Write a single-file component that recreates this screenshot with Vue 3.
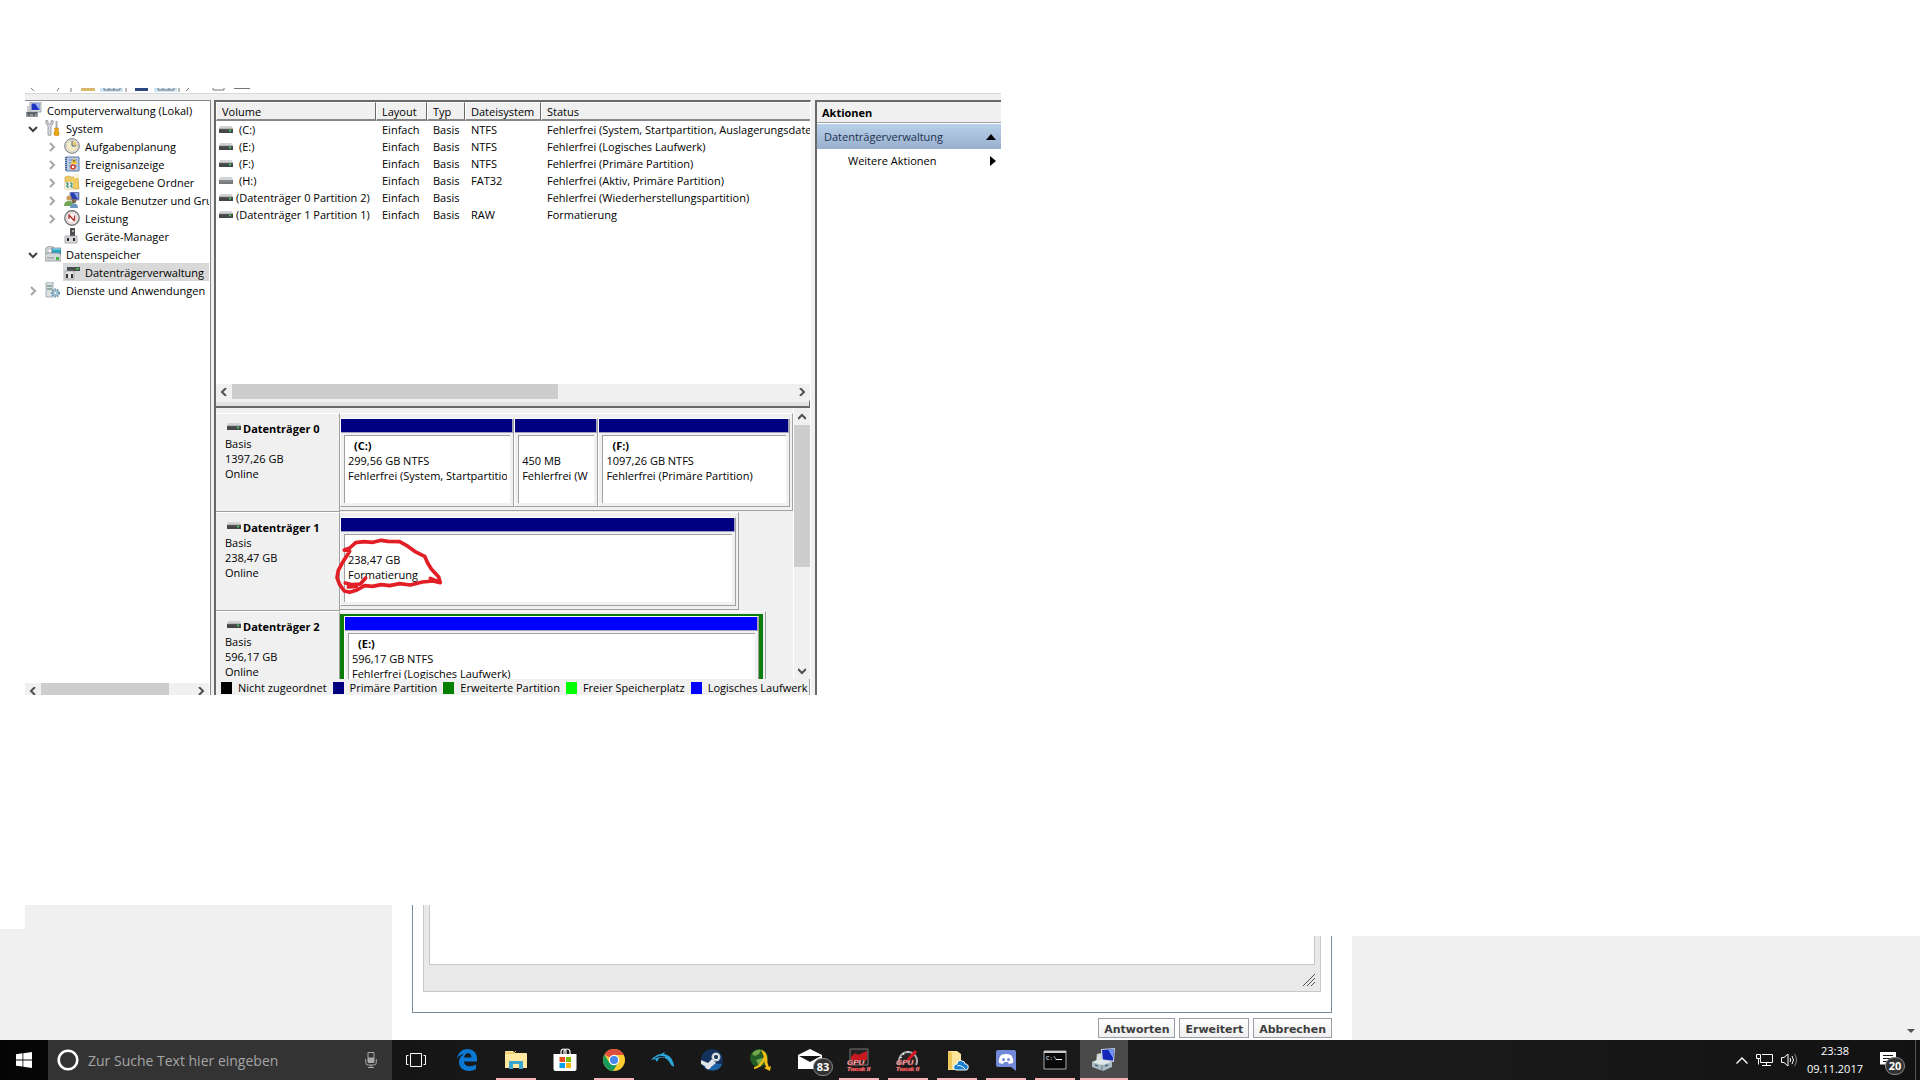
<template>
  <div class="desktop">
    <section class="mmc-window">
      <div class="toolbar">
        <svg class="toolbar-icons" width="240" height="4" viewBox="0 0 240 4">
          <path d="M6 0l3 3M34 0l-2 3M46 0v4M101 0v4M154 0v4M164 0l-3 3" stroke="#777" fill="none" />
          <rect x="56" y="0" width="14" height="3" fill="#d9b768" />
          <rect x="75" y="0" width="23" height="4" fill="#cde6f7" />
          <path d="M79 0v2h16V0M84 0v2M89 0v2" stroke="#777" fill="none" />
          <rect x="110" y="0" width="13" height="3" fill="#2b4681" />
          <rect x="129" y="0" width="23" height="4" fill="#cde6f7" />
          <path d="M133 0v2h16V0M138 0v2M144 0v2" stroke="#777" fill="none" />
          <path d="M188 0v2h11V0M209 .5h16" stroke="#777" fill="none" />
        </svg>
      </div>

      <div class="panes">
        <nav class="tree-pane">
          <ul class="tree">
            <li
              v-for="node in tree"
              :key="node.label"
              class="tree-row"
              :class="`depth-${node.depth}`"
            >
              <span v-if="node.depth" class="twisty">
                <svg v-if="node.state" width="10" height="10" viewBox="0 0 10 10">
                  <path v-if="node.state === 'open'" d="M1 3l4 4 4-4" class="twisty-open" />
                  <path v-else d="M3 1l4 4-4 4" class="twisty-closed" />
                </svg>
              </span>
              <span class="tree-label" :class="{ selected: node.selected }">
                <svg width="16" height="16" viewBox="0 0 16 16" v-html="icons[node.icon]"></svg>
                <span>{{ node.label }}</span>
              </span>
            </li>
          </ul>
          <div class="scrollbar-h tree-scroll">
            <button class="scroll-btn" aria-label="Links"><svg width="8" height="8" viewBox="0 0 8 8"><path d="M6 0L2 4l4 4" /></svg></button>
            <div class="track"><div class="thumb" :style="{ width: '84%' }"></div></div>
            <button class="scroll-btn" aria-label="Rechts"><svg width="8" height="8" viewBox="0 0 8 8"><path d="M2 0l4 4-4 4" /></svg></button>
          </div>
        </nav>

        <main class="center-pane">
          <div class="volume-list">
            <table class="volumes">
              <colgroup>
                <col class="col-volume">
                <col class="col-layout">
                <col class="col-type">
                <col class="col-fs">
                <col>
              </colgroup>
              <thead>
                <tr>
                  <th v-for="col in columns" :key="col">{{ col }}</th>
                </tr>
              </thead>
              <tbody>
                <tr v-for="vol in volumes" :key="vol.name">
                  <td class="cell-name">
                    <svg width="14" height="8" viewBox="0 0 14 8" v-html="vol.removable ? icons.driveGray : icons.drive"></svg>
                    <span :class="{ letter: vol.name.length < 5 }">{{ vol.name }}</span>
                  </td>
                  <td>Einfach</td>
                  <td>Basis</td>
                  <td>{{ vol.fs }}</td>
                  <td>{{ vol.status }}</td>
                </tr>
              </tbody>
            </table>
            <div class="scrollbar-h">
              <button class="scroll-btn" aria-label="Links"><svg width="8" height="8" viewBox="0 0 8 8"><path d="M6 0L2 4l4 4" /></svg></button>
              <div class="track"><div class="thumb" :style="{ width: '58%' }"></div></div>
              <button class="scroll-btn" aria-label="Rechts"><svg width="8" height="8" viewBox="0 0 8 8"><path d="M2 0l4 4-4 4" /></svg></button>
            </div>
          </div>
          <div class="splitter"></div>

          <div class="disk-area">
            <div class="disk-list">
              <div v-for="disk in disks" :key="disk.name" class="disk">
                <div class="disk-info">
                  <div class="disk-name">
                    <svg width="14" height="8" viewBox="0 0 14 8" v-html="icons.drive"></svg>
                    <span>{{ disk.name }}</span>
                  </div>
                  <div>Basis</div>
                  <div>{{ disk.size }}</div>
                  <div>Online</div>
                </div>
                <div class="disk-track">
                  <div class="disk-frame" :class="{ extended: disk.extended }" :style="{ width: disk.width + '%' }">
                    <div class="partitions">
                      <div
                        v-for="(part, i) in disk.parts"
                        :key="i"
                        class="partition"
                        :class="{ logical: disk.extended }"
                        :style="{ flexGrow: part.share }"
                      >
                        <div class="partition-bar"></div>
                        <div class="partition-box">
                          <div class="partition-letter">{{ part.letter }}</div>
                          <div>{{ part.size }}</div>
                          <div>{{ part.status }}</div>
                        </div>
                      </div>
                    </div>
                  </div>
                </div>
                <svg v-if="disk.marked" class="scribble" width="110" height="58" viewBox="400 502 330 174">
                  <path d="M434 541L450 544L443 556L430 576L416 602L412 624L420 645L434 664L450 668L472 661L495 648L518 650L545 645L570 648L600 642L632 646L668 637L700 634L722 639L717 622L695 598L684 580L675 560L645 545L620 527L600 516L565 515L545 512L520 518L492 516L468 519L450 535L434 541" />
                  <path d="M437 640L458 645L482 643L498 625M692 626L718 637M446 652L470 650" />
                </svg>
              </div>
            </div>
            <div class="scrollbar-v">
              <button class="scroll-btn" aria-label="Hoch"><svg width="8" height="8" viewBox="0 0 8 8"><path d="M0 6l4-4 4 4" /></svg></button>
              <div class="track"><div class="thumb" :style="{ height: '60%' }"></div></div>
              <button class="scroll-btn" aria-label="Runter"><svg width="8" height="8" viewBox="0 0 8 8"><path d="M0 2l4 4 4-4" /></svg></button>
            </div>
          </div>

          <div class="legend">
            <span v-for="item in legend" :key="item.label" class="legend-item">
              <i class="swatch" :class="item.kind"></i>{{ item.label }}
            </span>
          </div>
        </main>

        <aside class="actions-pane">
          <h2>Aktionen</h2>
          <button class="action-group">
            <span>Datenträgerverwaltung</span>
            <svg width="10" height="6" viewBox="0 0 10 6"><path d="M0 6l5-6 5 6z" /></svg>
          </button>
          <button class="action-item">
            <span>Weitere Aktionen</span>
            <svg width="6" height="10" viewBox="0 0 6 10"><path d="M0 0l6 5-6 5z" /></svg>
          </button>
        </aside>
      </div>
    </section>

    <section class="forum">
      <div class="side side-left"></div>
      <div class="forum-main">
        <div class="editor-border">
          <div class="editor">
            <textarea aria-label="Nachricht"></textarea>
            <svg class="grip" width="12" height="12" viewBox="0 0 12 12"><path d="M0 12L12 0M4 12l8-8M8 12l4-4" /></svg>
          </div>
        </div>
        <div class="form-buttons">
          <button>Antworten</button>
          <button>Erweitert</button>
          <button>Abbrechen</button>
        </div>
      </div>
      <div class="side side-right">
        <svg width="8" height="4" viewBox="0 0 8 4"><path d="M0 0h8L4 4z" fill="#505050" /></svg>
      </div>
      <div class="cover"></div>
    </section>

    <footer class="taskbar">
      <button class="start" aria-label="Start">
        <svg width="16" height="16" viewBox="0 0 16 16"><path d="M0 2.2l6.5-.9v6.2H0zM7.3 1.2L16 0v7.5H7.3zM0 8.4h6.5v6.2L0 13.7zM7.3 8.4H16V16l-8.7-1.2z" fill="#fff" /></svg>
      </button>
      <label class="search">
        <svg width="22" height="22" viewBox="0 0 22 22"><circle cx="11" cy="11" r="9.3" fill="none" stroke="#fff" stroke-width="2.6" /></svg>
        <input type="text" placeholder="Zur Suche Text hier eingeben">
        <svg width="12" height="16" viewBox="0 0 12 16"><path d="M3 .5h6v10H3zM.7 7v3.500q0 2.500 2.500 2.500h5.600q2.500 0 2.500-2.500V7M6 13v2.500M3 15.500h6" fill="none" stroke="#aaa" /><path d="M3 5.500h6v5H3z" fill="#aaa" /></svg>
      </label>
      <button class="task-view" aria-label="Taskansicht">
        <svg width="20" height="14" viewBox="0 0 20 14"><path d="M4.500.5h11v13h-11zM2.500 2.500h-2v9h2M17.500 2.500h2v9h-2" fill="none" stroke="#fff" /></svg>
      </button>
      <div class="apps">
        <button
          v-for="app in apps"
          :key="app.name"
          class="app"
          :class="{ running: app.running, active: app.active }"
          :aria-label="app.name"
        >
          <svg width="24" height="24" viewBox="0 0 24 24" v-html="icons[app.icon]"></svg>
          <span v-if="app.badge" class="badge mail-badge">{{ app.badge }}</span>
        </button>
      </div>
      <div class="tray">
        <svg width="12" height="7" viewBox="0 0 12 7"><path d="M.5 6.500L6 1l5.500 5.500" fill="none" stroke="#fff" stroke-width="1.400" /></svg>
        <svg width="17" height="14" viewBox="0 0 17 14"><path d="M6 1.500h10.500v8H4.500V6M10.500 9.500v3M6 12.500h9M.5 1.500h4v4h-4zM2.500 5.500v6" fill="none" stroke="#fff" /></svg>
        <svg width="17" height="14" viewBox="0 0 17 14"><path d="M.5 4.500h2.500l4-3.500v12l-4-3.500H.5z" fill="none" stroke="#fff" /><path d="M9 5q1.500 2 0 4M11 3q3 4 0 8" fill="none" stroke="#fff" /><path d="M13.500 1q4 6 0 12" fill="none" stroke="#888" /></svg>
        <div class="clock">
          <div>23:38</div>
          <div>09.11.2017</div>
        </div>
        <div class="notify">
          <svg width="16" height="16" viewBox="0 0 16 16"><path d="M0 0h16v12.500H8L5 15.500v-3H0z" fill="#fff" /><path d="M3 3.500h10M3 6.500h10M3 9.500h6" stroke="#161616" /></svg>
          <span class="badge">20</span>
        </div>
      </div>
    </footer>
  </div>
</template>

<script setup>
const columns = ['Volume', 'Layout', 'Typ', 'Dateisystem', 'Status'];

const tree = [
  { label: 'Computerverwaltung (Lokal)', depth: 0, icon: 'computer' },
  { label: 'System', depth: 1, icon: 'tools', state: 'open' },
  { label: 'Aufgabenplanung', depth: 2, icon: 'clock', state: 'closed' },
  { label: 'Ereignisanzeige', depth: 2, icon: 'events', state: 'closed' },
  { label: 'Freigegebene Ordner', depth: 2, icon: 'shared', state: 'closed' },
  { label: 'Lokale Benutzer und Gruppen', depth: 2, icon: 'users', state: 'closed' },
  { label: 'Leistung', depth: 2, icon: 'perf', state: 'closed' },
  { label: 'Geräte-Manager', depth: 2, icon: 'device' },
  { label: 'Datenspeicher', depth: 1, icon: 'storage', state: 'open' },
  { label: 'Datenträgerverwaltung', depth: 2, icon: 'diskmgmt', selected: true },
  { label: 'Dienste und Anwendungen', depth: 1, icon: 'services', state: 'closed' }
];

const volumes = [
  { name: '(C:)', fs: 'NTFS', status: 'Fehlerfrei (System, Startpartition, Auslagerungsdatei)' },
  { name: '(E:)', fs: 'NTFS', status: 'Fehlerfrei (Logisches Laufwerk)' },
  { name: '(F:)', fs: 'NTFS', status: 'Fehlerfrei (Primäre Partition)' },
  { name: '(H:)', fs: 'FAT32', status: 'Fehlerfrei (Aktiv, Primäre Partition)', removable: true },
  { name: '(Datenträger 0 Partition 2)', fs: '', status: 'Fehlerfrei (Wiederherstellungspartition)' },
  { name: '(Datenträger 1 Partition 1)', fs: 'RAW', status: 'Formatierung' }
];

const disks = [
  {
    name: 'Datenträger 0',
    size: '1397,26 GB',
    width: 100,
    parts: [
      { letter: '(C:)', size: '299,56 GB NTFS', status: 'Fehlerfrei (System, Startpartitio', share: 175 },
      { letter: '', size: '450 MB', status: 'Fehlerfrei (W', share: 82 },
      { letter: '(F:)', size: '1097,26 GB NTFS', status: 'Fehlerfrei (Primäre Partition)', share: 193 }
    ]
  },
  {
    name: 'Datenträger 1',
    size: '238,47 GB',
    width: 88,
    marked: true,
    parts: [{ letter: '', size: '238,47 GB', status: 'Formatierung', share: 1 }]
  },
  {
    name: 'Datenträger 2',
    size: '596,17 GB',
    width: 94,
    extended: true,
    parts: [{ letter: '(E:)', size: '596,17 GB NTFS', status: 'Fehlerfrei (Logisches Laufwerk)', share: 1 }]
  }
];

const legend = [
  { label: 'Nicht zugeordnet', kind: 'unallocated' },
  { label: 'Primäre Partition', kind: 'primary' },
  { label: 'Erweiterte Partition', kind: 'extended' },
  { label: 'Freier Speicherplatz', kind: 'free' },
  { label: 'Logisches Laufwerk', kind: 'logical' }
];

const apps = [
  { name: 'Edge', icon: 'edge' },
  { name: 'Explorer', icon: 'explorer', running: true },
  { name: 'Store', icon: 'store' },
  { name: 'Chrome', icon: 'chrome', running: true },
  { name: 'Dolphin', icon: 'dolphin' },
  { name: 'Steam', icon: 'steam' },
  { name: 'JDownloader', icon: 'jdownloader' },
  { name: 'Mail', icon: 'mail', badge: '83' },
  { name: 'GPU Tweak II', icon: 'gpu', running: true },
  { name: 'GPU Tweak II Monitor', icon: 'gpuMonitor', running: true },
  { name: 'OneDrive', icon: 'onedrive', running: true },
  { name: 'Discord', icon: 'discord', running: true },
  { name: 'Eingabeaufforderung', icon: 'cmd', running: true },
  { name: 'Computerverwaltung', icon: 'mmc', active: true }
];

// svg contents, tree icons are 16x16, drives 14x8, taskbar icons 24x24
const icons = {
  computer: '<path d="M4 0h11v10H4z" fill="#d8dce0" stroke="#8a929a" stroke-width=".7"/><path d="M5.500 1.500h8v6.500h-8z" fill="#1c35c0"/><path d="M9 1.500h4.500v6.500z" fill="#9db4f0"/><path d="M1 4h3v7H1z" fill="#c8ccd0"/><path d="M0 10h12v5H0z" fill="#8d959d"/><path d="M1 11h10M2 13h2M7 13h2" stroke="#333"/>',
  tools: '<path d="M1 0v4l2 2v9q1.500 1.500 3 0V6l2-2V0L6 1v3H3V1z" fill="#d9dcdf" stroke="#7b8086" stroke-width=".7"/><path d="M10.500 1h2v7h-2z" fill="#a8adb2"/><path d="M9.500 8h4l-.5 3 1 1v3l-2 1-3-1v-3l1-1z" fill="#e9a51a" stroke="#b97b08" stroke-width=".5"/>',
  clock: '<circle cx="8" cy="8" r="7.300" fill="#e9e9e6" stroke="#777" stroke-width="1"/><circle cx="8" cy="8" r="5.500" fill="#f8edc8" stroke="#b6b6b0" stroke-width=".5"/><path d="M8 8V3a5 5 0 0 1 5 5z" fill="#edc975"/><path d="M8 3v5h4" fill="none" stroke="#476a96"/>',
  events: '<path d="M2 1h13v14H2z" fill="#b8cce6" stroke="#5a77a5"/><path d="M5 4h8M5 7h8M5 10h8" stroke="#6482b6"/><path d="M2 1v14" stroke="#445f91" stroke-width="2" stroke-dasharray="1 1"/><path d="M10 2l3.500 6h-7z" fill="#f2c93b"/><path d="M10 4v2" stroke="#333"/><circle cx="9" cy="11" r="2.800" fill="#d44a37"/><path d="M8 10l2 2M10 10l-2 2" stroke="#fff"/>',
  shared: '<path d="M1 3l4-1 2 1h7l1 12H1z" fill="#f0cb63" stroke="#c39a37" stroke-width=".6"/><path d="M10 0h5v4h-5z" fill="#faf4dc"/><path d="M1 8h8v7H1z" fill="#e8f0df"/><path d="M2 9h2v2H3v2h2M6 9h2v2H7v2h2" stroke="#267f70" fill="none"/>',
  users: '<path d="M6 0h9v8H6z" fill="#263fae" stroke="#9ba7bd"/><path d="M10 1h4v6z" fill="#8fa6e4"/><circle cx="5" cy="6" r="2.600" fill="#c89c5c"/><path d="M0 14q0-5 5-5t5 5z" fill="#72a758"/><circle cx="10" cy="9" r="2.300" fill="#7f6650"/><path d="M6 16q0-4.500 4-4.500t4 4.500z" fill="#6c94bd"/>',
  perf: '<circle cx="8" cy="8" r="7.200" fill="#fff" stroke="#777" stroke-width="1.400"/><circle cx="8" cy="8" r="5.300" fill="#fbf4f4" stroke="#c4a0a0" stroke-width=".6"/><path d="M4.500 4.500l6 6.500M5 5v4M10.500 5.500v5" fill="none" stroke="#b42e2e" stroke-width="1.300"/>',
  device: '<path d="M6 0h5v10H6z" fill="#4c5054"/><path d="M8 2h2v2H8z" fill="#aaa"/><path d="M1 8h12v7H1z" fill="#d7d9db" stroke="#8d9195" stroke-width=".7"/><path d="M4 10v3M10 10v3" stroke="#222" stroke-width="2"/>',
  storage: '<circle cx="5" cy="5" r="5" fill="#c9cfce" stroke="#7e8787" stroke-width=".6"/><circle cx="5" cy="5" r="1.500" fill="#fff"/><path d="M7 2h9v6H7z" fill="#2ba6c6" stroke="#55676e" stroke-width=".6"/><path d="M7.500 3h8" stroke="#b9e8f3"/><path d="M0 9l2-2h12l2 2v6H0z" fill="#d5d8da" stroke="#7c8387" stroke-width=".7"/><path d="M2 12h7" stroke="#858b90"/><path d="M11 11h3v3h-3z" fill="#43b941"/>',
  diskmgmt: '<path d="M3 3l2-2h9l2 2z" fill="#d8dbdd"/><path d="M3 3h13v4H3z" fill="#484d50"/><path d="M12 4h3v1.500h-3z" fill="#40c44a"/><path d="M1 7h9v8H1z" fill="#e3e5e6" stroke="#999" stroke-width=".7"/><path d="M3 10v4M8 10v4" stroke="#333" stroke-width="2"/>',
  services: '<path d="M1 1l2-1h5v15H1z" fill="#dce0e3" stroke="#87929b" stroke-width=".7"/><path d="M2 4h5M2 7h5" stroke="#467b61"/><circle cx="10.500" cy="11" r="3.500" fill="#b5cddd" stroke="#6692ad" stroke-width="2" stroke-dasharray="1.500 1"/><circle cx="10.500" cy="11" r="1.500" fill="#f7fafb" stroke="#6692ad" stroke-width=".6"/>',
  drive: '<path d="M1 0h12l1 3H0z" fill="#d1d3d4"/><path d="M0 3h14v4H0z" fill="#45484b"/><path d="M0 3h14" stroke="#777" stroke-width=".6"/><path d="M10 4.500h2" stroke="#42df5c" stroke-width="1.300"/>',
  driveGray: '<path d="M1 0h12l1 3H0z" fill="#d1d3d4"/><path d="M0 3h14v4H0z" fill="#75797c"/><path d="M1 4h12" stroke="#999"/>',
  edge: '<path d="M2 10.500C3.200 4.200 7.500 1 12.500 1 18.700 1 22 5.400 22 11v2.500H9c.2 3.400 3.200 4.800 6 4.800 2.300 0 4.300-.7 6-1.700v4.500C19 22.400 16.700 23 14 23 8 23 4 19.500 4 14c0-3.600 2-6.300 5-8-3 .5-5.500 2-7 4.500zM9.200 9.500h7.300C16.500 7 15.300 5.300 13 5.300c-2.200 0-3.500 1.800-3.800 4.200z" fill="#0b78d4"/>',
  explorer: '<path d="M1 4q0-1 1-1h7l2 2h11q1 0 1 1v14H1z" fill="#ffe9a0"/><path d="M1 5h9l2-2" stroke="#e2b545" fill="none"/><path d="M5 13h14v8h-4v-5H9v5H5z" fill="#3ba6cf"/>',
  store: '<path d="M8 6V4q0-3 3-3 2 0 2 3v2M11 6V3q1-2 3-2 3 0 3 3v2" fill="none" stroke="#fff" stroke-width="1.200"/><path d="M.5 6h23v15q0 2-2 2h-19q-2 0-2-2z" fill="#fff"/><path d="M6.500 9H12v5H6.500z" fill="#e84d20"/><path d="M13 9h5v5h-5z" fill="#7dba00"/><path d="M6.500 15H12v5H6.500z" fill="#00a0ed"/><path d="M13 15h5v5h-5z" fill="#fdb700"/>',
  chrome: '<circle cx="12" cy="12" r="11" fill="#fbcd33"/><path d="M12 12L2.500 6.500A11 11 0 0 1 21.700 7H12z" fill="#df4d3f"/><path d="M2.500 6.500A11 11 0 0 0 11 23l5.500-9L12 12 7.600 15z" fill="#179b5d"/><circle cx="12" cy="12" r="5.200" fill="#fff"/><circle cx="12" cy="12" r="4" fill="#4789ef"/>',
  dolphin: '<path d="M0 12q2-2 3-3 4-3 7-3l4-2-1 2q7 1 9.500 9l.5 4-3-2q-2-5-6-7-4-1-6 0l-2 4-2-3-4 1z" fill="#2da8dc"/><path d="M4 10q5-3 10-1" fill="none" stroke="#17171a" stroke-width="1"/>',
  steam: '<circle cx="12" cy="12" r="11" fill="#14305c"/><path d="M1 14q5 10 15 8 5-2 6-6L9 15z" fill="#1b64a5"/><circle cx="16" cy="9" r="4.500" fill="#c3ccd4"/><circle cx="16" cy="9" r="2.700" fill="#213e5c" stroke="#fff"/><path d="M1 12l7 3 4-4 4 4-5 4q-1 3-4 2-2-1-2-3l-4-2z" fill="#dde3e8"/>',
  jdownloader: '<circle cx="10" cy="10" r="9" fill="#245d24"/><path d="M3 6q4-5 9-4l-2 4-4 2zM7 12l6-2 3 3-5 6z" fill="#75a84a"/><path d="M12 2q5 1 6 7 0 6 2 10l2-1-1 5-6-3 2-1q-2-4-2-9-1-5-3-8z" fill="#f4bd18"/><path d="M5 20q6 0 11-11" stroke="#f4bd18" stroke-width="2" fill="none"/>',
  mail: '<path d="M0 7L12 1l12 6v14H0z" fill="#fff"/><path d="M1 8h22l-11 6z" fill="#151515"/>',
  gpu: '<path d="M3 1h18v16H3z" fill="#222" stroke="#777"/><path d="M4 9q4-6 7-2l9-4v9H4z" fill="#c81820"/><g fill="#fff" stroke="#d71923" stroke-width=".4" font-family="Liberation Sans" font-weight="bold" font-style="italic"><text x="0" y="17" font-size="8">GPU</text><text x="0" y="23" font-size="6">Tweak II</text></g>',
  gpuMonitor: '<path d="M4 17A9 9 0 1 1 20 17" stroke="#aaa" stroke-width="2" fill="#242424"/><path d="M12 12l8-9" stroke="#d71923" stroke-width="3"/><path d="M7 5l1 2M12 3v2M4 9l2 1" stroke="#fff"/><g fill="#fff" stroke="#d71923" stroke-width=".4" font-family="Liberation Sans" font-weight="bold" font-style="italic"><text x="0" y="17" font-size="8">GPU</text><text x="0" y="23" font-size="6">Tweak II</text></g>',
  onedrive: '<path d="M3 3h9l4 3v16H3z" fill="#ffe59a"/><path d="M3 3l4 2v17l-4-1z" fill="#edc658"/><path d="M11 22q-4-1-2-4 0-2 3-2 1-5 5-3 3 0 3 3 4 0 3 4 0 2-2 2z" fill="#1781cf" stroke="#fff"/><path d="M12 18q3-2 8 3" stroke="#fff" fill="none"/>',
  discord: '<path d="M2 4q0-2 2-2h16q2 0 2 2v19l-5-4H4q-2 0-2-2z" fill="#7289da"/><path d="M7 7q5-2 10 0 3 4 2 8l-4 1-1-2h-4l-1 2-4-1q-1-4 2-8z" fill="#fff"/><circle cx="9.500" cy="11.500" r="1.500" fill="#7289da"/><circle cx="14.500" cy="11.500" r="1.500" fill="#7289da"/>',
  cmd: '<path d="M1 3h22v18H1z" fill="#080808" stroke="#aaa"/><path d="M1 4h22" stroke="#ccc" stroke-width="2"/><text x="3" y="12" fill="#fff" font-size="6" font-family="Liberation Mono">C:\\</text><path d="M13 11.500h6" stroke="#fff"/>',
  mmc: '<path d="M5 6l5-1v10H4z" fill="#d8dcd7" stroke="#8c9592" stroke-width=".5"/><path d="M9 1l14-1-1 14-13-1z" fill="#c3cbe0"/><path d="M10 2l12-1-1 11.500-10-1z" fill="#1426b8"/><path d="M16 1.500l6-.5-1 9z" fill="#7795f5"/><path d="M0 14l8-3 12 3v5l-9 4-11-4z" fill="#a9bbc3"/><path d="M0 14l10 3 10-3-12-3z" fill="#e0e8ea"/><path d="M10 17v6" stroke="#687b85"/><path d="M3 17l3 1M13 18l3-1" stroke="#4c6873" stroke-width="1.500"/>'
};
</script>

<style>
body {
  background: #fff;
}
</style>

<style scoped>
* {
  box-sizing: border-box;
}

.desktop {
  display: flex;
  flex-direction: column;
  min-height: 100vh;
  padding-top: 88px;
  font-family: "Open Sans", "Noto Sans", sans-serif;
  font-size: 11px;
  line-height: 15px;
  color: #000;
  overflow: hidden;
}

button {
  padding: 0;
  border: 0;
  border-radius: 0;
  background: none;
  color: inherit;
  font: inherit;
}

svg {
  flex: none;
  display: block;
}

.mmc-window {
  display: flex;
  flex-direction: column;
  width: calc(50% + 16px);
  height: calc(50vh + 67px);
  margin-left: 25px;
  overflow: hidden;
}

.toolbar {
  flex: none;
  height: 6px;
  border-bottom: 1px solid #d8d8d8;
}

.panes {
  flex: 1;
  display: grid;
  grid-template-columns: 186px minmax(0, 1fr) 186px;
  grid-template-rows: minmax(0, 1fr);
  gap: 3px;
  min-height: 0;
  padding-top: 6px;
  background: #f0f0f0;
}

/* tree */
.tree-pane {
  display: flex;
  flex-direction: column;
  min-width: 0;
  border-top: 1px solid #828790;
  border-right: 1px solid #828790;
  background: #fff;
}

.tree {
  flex: 1;
  margin: 0;
  padding: 0;
  list-style: none;
  overflow: hidden;
}

.tree-row {
  display: flex;
  height: 18px;
  white-space: nowrap;
  overflow: hidden;
}

.tree-row.depth-2 {
  padding-left: 19px;
}

.twisty {
  flex: none;
  width: 19px;
  padding: 5px 3px;
}

.twisty path {
  fill: none;
  stroke-width: 2;
}

.twisty-open {
  stroke: #404040;
}

.twisty-closed {
  stroke: #a6a6a6;
}

.tree-label {
  flex: 1;
  display: flex;
  align-items: center;
  gap: 5px;
  min-width: 0;
  margin-right: 1px;
  padding-left: 1px;
  overflow: hidden;
}

.tree-label.selected {
  background: #d9d9d9;
}

/* scrollbars */
.scrollbar-h {
  display: flex;
  height: 15px;
  background: #f0f0f0;
}

.tree-scroll {
  height: 12px;
  margin-right: 1px;
}

.scroll-btn {
  flex: none;
  display: flex;
  align-items: center;
  justify-content: center;
  width: 16px;
  height: 15px;
}

.scroll-btn path {
  fill: none;
  stroke: #505050;
  stroke-width: 2;
}

.track {
  flex: 1;
}

.thumb {
  height: 100%;
  background: #cdcdcd;
}

.scrollbar-v {
  display: flex;
  flex-direction: column;
  width: 17px;
  border-left: 1px solid #fff;
}

.scrollbar-v .scroll-btn {
  height: 17px;
}

/* center */
.center-pane {
  display: flex;
  flex-direction: column;
  min-width: 0;
  margin-right: 1px;
  border-top: 2px solid #696969;
  border-left: 2px solid #696969;
  border-right: 1px solid #fff;
}

.volume-list {
  flex: none;
  display: flex;
  flex-direction: column;
  justify-content: space-between;
  height: 297px;
  background: #fff;
}

.volumes {
  width: 100%;
  table-layout: fixed;
  border-collapse: separate;
  border-spacing: 0;
}

.col-volume {
  width: 160px;
}

.col-layout {
  width: 51px;
}

.col-type {
  width: 38px;
}

.col-fs {
  width: 76px;
}

.volumes th {
  height: 19px;
  padding: 0 5px;
  border-top: 1px solid #fff;
  border-left: 1px solid #fff;
  border-right: 1px solid #696969;
  border-bottom: 2px solid #888;
  background: #f0f0f0;
  font-weight: 400;
  text-align: left;
}

.volumes th:last-child {
  border-right: 0;
}

.volumes td {
  height: 17px;
  padding: 0 0 0 6px;
  white-space: nowrap;
  overflow: hidden;
}

.volumes .cell-name {
  display: flex;
  align-items: center;
  gap: 3px;
  padding-left: 3px;
}

.letter {
  padding-left: 3px;
}

.splitter {
  flex: none;
  height: 9px;
  border-top: 3px solid #f0f0f0;
  border-bottom: 2px solid #696969;
  border-right: 1px solid #696969;
  background: #e3e3e3;
}

/* disks */
.disk-area {
  flex: 1;
  display: flex;
  min-height: 0;
  overflow: hidden;
}

.disk-list {
  flex: 1;
  min-width: 0;
  padding-top: 5px;
  overflow: hidden;
}

.disk {
  position: relative;
  display: flex;
  height: 99px;
}

.disk-info {
  width: 124px;
  padding: 7px 0 0 9px;
  border-top: 1px solid #fff;
  border-right: 1px solid #a0a0a0;
  border-bottom: 1px solid #a0a0a0;
}

.disk-name {
  display: flex;
  gap: 2px;
  padding-left: 2px;
  font-weight: 700;
  white-space: nowrap;
}

.disk-name svg {
  margin-top: 2px;
}

.disk-track {
  flex: 1;
  display: flex;
  min-width: 0;
  padding-bottom: 1px;
}

.disk-frame {
  padding: 4px 2px 3px 0;
  border-top: 1px solid #fff;
  border-right: 1px solid #a0a0a0;
  border-bottom: 1px solid #a0a0a0;
}

.disk-frame.extended {
  padding-top: 2px;
}

.partitions {
  display: flex;
  height: 100%;
}

.extended .partitions {
  border: 4px solid #0b7d0b;
  border-top-width: 2px;
}

.partition {
  flex: 0 1 0;
  display: flex;
  flex-direction: column;
  min-width: 0;
  padding: 0 3px 3px 0;
  border-top: 1px solid #fff;
  border-left: 1px solid #fff;
  border-right: 1px solid #a0a0a0;
  border-bottom: 1px solid #a0a0a0;
}

.partition-bar {
  height: 14px;
  margin-right: -3px;
  border-right: 1px solid #a0a0c0;
  border-bottom: 1px solid #a0a0c0;
  background: #000080;
}

.logical .partition-bar {
  background: #00f;
}

.partition-box {
  flex: 1;
  margin: 2px 0 0 3px;
  padding: 2px 3px 0;
  border-top: 1px solid #a0a0a0;
  border-left: 1px solid #a0a0a0;
  background: #fff;
  white-space: nowrap;
  overflow: hidden;
}

.partition-box > div {
  overflow: hidden;
}

.partition-box .partition-letter {
  height: 15px;
  padding-left: 6px;
  font-weight: 700;
}

.scribble {
  position: absolute;
  left: 117px;
  top: 25px;
}

.scribble path {
  fill: none;
  stroke: #e21f26;
  stroke-width: 11;
  stroke-linecap: round;
  stroke-linejoin: round;
}

.legend {
  flex: none;
  display: flex;
  gap: 6px;
  height: 16px;
  padding: 1px 0 0 5px;
  border-right: 1px solid #a0a0a0;
  white-space: nowrap;
  overflow: hidden;
}

.legend-item {
  display: flex;
  align-items: center;
  gap: 6px;
}

.swatch {
  width: 11px;
  height: 12px;
}

.unallocated {
  background: #000;
}

.primary {
  background: #000080;
}

.swatch.extended {
  background: #008000;
}

.free {
  background: #0f0;
}

.swatch.logical {
  background: #00f;
}

/* actions */
.actions-pane {
  border-top: 2px solid #696969;
  border-left: 2px solid #696969;
  background: #fff;
}

.actions-pane h2 {
  height: 21px;
  margin: 0 0 1px;
  padding: 2px 5px;
  border-bottom: 1px solid #a0a0a0;
  background: #f0f0f0;
  font-size: 11px;
  line-height: 18px;
}

.action-group,
.action-item {
  display: flex;
  align-items: center;
  justify-content: space-between;
  width: 100%;
  height: 25px;
  padding: 0 5px 0 7px;
}

.action-group {
  background: linear-gradient(#b9d0ea, #98b0cd);
  color: #1e3250;
}

.action-group svg {
  fill: #000;
}

.action-item {
  height: 23px;
  padding: 0 5px 0 31px;
}

/* forum form */
.forum {
  position: relative;
  display: grid;
  grid-template-columns: 392px minmax(0, 1fr) 568px;
  height: 135px;
  margin-top: auto;
}

.side {
  background: #f0f0f0;
}

.side-left::before {
  content: '';
  display: block;
  width: 25px;
  height: 24px;
  background: #fff;
}

.side-right {
  display: flex;
  align-items: flex-end;
  justify-content: flex-end;
  padding: 0 5px 7px 0;
}

.forum-main {
  display: flex;
  flex-direction: column;
  gap: 5px;
  padding: 0 20px 2px;
}

.editor-border {
  height: 108px;
  padding: 0 10px 20px;
  border: 1px solid #768b95;
  border-top: 0;
}

.editor {
  position: relative;
  height: 87px;
  padding: 0 5px;
  border: 1px solid #c8c8c8;
  border-top: 0;
  background: #e9e9e9;
}

.editor textarea {
  display: block;
  width: 100%;
  height: 60px;
  border: 1px solid #c8c8c8;
  border-top: 0;
  background: #fff;
  resize: none;
}

.grip {
  position: absolute;
  right: 5px;
  bottom: 5px;
}

.grip path {
  stroke: #555;
}

.form-buttons {
  display: flex;
  justify-content: flex-end;
  gap: 4px;
}

.form-buttons button {
  height: 20px;
  padding: 2px 5px 0;
  border: 1px solid #9a9fa8;
  background: linear-gradient(#fff, #efefef);
  color: #3e3e3e;
  font: bold 11px "DejaVu Sans", sans-serif;
}

.cover {
  position: absolute;
  top: 0;
  right: 0;
  width: calc(50% - 41px);
  height: 31px;
  background: #fff;
}

/* taskbar */
.taskbar {
  display: flex;
  height: 40px;
  background: linear-gradient(90deg, #050505, #181818 25%, #1a1a1a 75%, #121212);
  color: #fff;
}

.start,
.task-view {
  display: flex;
  align-items: center;
  justify-content: center;
  width: 48px;
}

.search {
  display: flex;
  align-items: center;
  width: 344px;
  padding: 0 15px 0 9px;
  background: #333;
}

.search input {
  flex: 1;
  min-width: 0;
  padding: 0 9px;
  border: 0;
  background: none;
  color: #a5a5a5;
  font: 14px "Open Sans", sans-serif;
}

.search input::placeholder {
  color: #a5a5a5;
}

.apps {
  display: flex;
  gap: 1px;
  padding-left: 3px;
}

.app {
  position: relative;
  display: flex;
  align-items: center;
  justify-content: center;
  width: 48px;
}

.app.active {
  background: #4a4a4a;
}

.app.running::after,
.app.active::after {
  content: '';
  position: absolute;
  left: 4px;
  right: 4px;
  bottom: 0;
  height: 2px;
  background: #f4b4b8;
}

.app.active::after {
  left: 0;
  right: 0;
}

.badge {
  position: absolute;
  right: -9px;
  bottom: -7px;
  min-width: 20px;
  height: 18px;
  border: 1px solid #888;
  border-radius: 9px;
  background: #333;
  font-size: 11px;
  font-weight: 700;
  line-height: 16px;
  text-align: center;
}

.mail-badge {
  right: 1px;
  bottom: 4px;
}

.tray {
  display: flex;
  align-items: center;
  gap: 8px;
  margin-left: auto;
  margin-right: 4px;
  padding-right: 19px;
  border-right: 1px solid #555;
}

.clock {
  margin-left: 1px;
  line-height: 18px;
  text-align: center;
}

.notify {
  position: relative;
  margin-left: 9px;
}
</style>
